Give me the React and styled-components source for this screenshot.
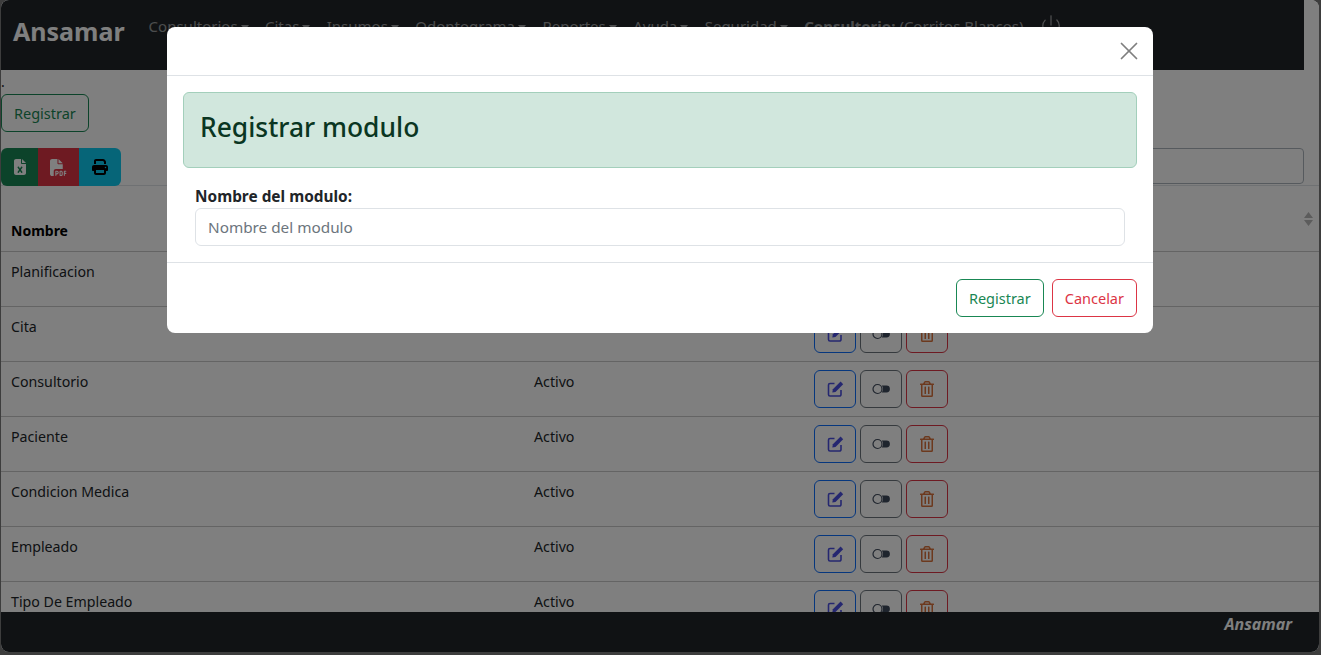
import React from "react";
import styled, { createGlobalStyle } from "styled-components";
import { FaFileExcel, FaFilePdf, FaPrint } from "react-icons/fa6";
import { FaRegTrashAlt } from "react-icons/fa";
import { Power, X } from "lucide-react";

const FONT = `"Noto Sans", "Open Sans", "Liberation Sans", sans-serif`;

const Global = createGlobalStyle`
  html, body { margin: 0; height: 100%; overflow: hidden; background: #3d3d3d; }
  body { font-family: ${FONT}; font-size: 14px; color: #212529; }
  * { box-sizing: border-box; }
`;

const Win = styled.div`
  position: relative;
  width: 1318px;
  height: 652px;
  margin-left: 1px;
  border-radius: 8px;
  overflow: hidden;
  background: #fff;
`;

const Navbar = styled.nav`
  width: 1303px;
  height: 70px;
  background: #212529;
  display: flex;
  align-items: flex-start;
  padding: 14px 0 0 12px;
`;

const Brand = styled.div`
  font-size: 25px;
  font-weight: 700;
  line-height: 34px;
  color: #fff;
  margin-right: 24px;
`;

const NavItem = styled.div`
  font-size: 15px;
  line-height: 24px;
  color: rgba(255, 255, 255, 0.55);
  margin-right: 16.4px;
  white-space: nowrap;
  display: flex;
  align-items: center;
  gap: 3px;
  b { font-weight: 700; margin-right: 4px; }
`;

const Caret = styled.span`
  width: 0;
  height: 0;
  border-left: 4px solid transparent;
  border-right: 4px solid transparent;
  border-top: 5px solid currentColor;
  margin-top: 2px;
`;

const Dot = styled.div`
  height: 24px;
  line-height: 24px;
  font-size: 14px;
`;

const Content = styled.main`
  width: 1318px;
`;

const OutlineBtn = styled.button`
  font: inherit;
  font-size: 14.5px;
  height: 38px;
  padding: 0 12px;
  background: transparent;
  border: 1px solid ${(p) => p.$c};
  color: ${(p) => p.$c};
  border-radius: 6px;
  white-space: nowrap;
`;

const RegisterRow = styled.div`
  height: 54px;
`;

const ToolRow = styled.div`
  height: 38px;
  display: flex;
  justify-content: space-between;
  align-items: flex-start;
  border-bottom: 1px solid #dee2e6;
`;

const ExportGroup = styled.div`
  display: flex;
  height: 38px;
  border-radius: 6px;
  overflow: hidden;
`;

const ExportBtn = styled.button`
  width: ${(p) => p.$w}px;
  height: 38px;
  border: 0;
  padding: 0;
  background: ${(p) => p.$bg};
  color: ${(p) => p.$fg};
  display: flex;
  align-items: center;
  justify-content: center;
`;

const Search = styled.input`
  width: 400px;
  height: 36px;
  margin-right: 15px;
  border: 1px solid #adb5bd;
  border-radius: 4px;
  background: transparent;
`;

const HeadRow = styled.div`
  position: relative;
  height: 66px;
  display: grid;
  grid-template-columns: 523px 280px 1fr;
  align-items: end;
  border-bottom: 1px solid #c8c8c8;
`;

const HeadCell = styled.div`
  padding: 0 10px 8px;
  font-weight: 700;
  font-size: 14px;
  line-height: 24px;
  color: #000;
`;

const SortMark = styled.svg`
  position: absolute;
  left: 1303px;
  top: 26px;
`;

const Row = styled.div`
  height: 55px;
  display: grid;
  grid-template-columns: 523px 280px 1fr;
  align-items: start;
  padding-top: 8px;
  border-bottom: 1px solid #c8c8c8;
`;

const Cell = styled.div`
  padding: 0 10px;
  font-size: 14.2px;
  line-height: 24px;
  color: #212529;
`;

const Actions = styled.div`
  padding: 0 10px;
  display: flex;
  gap: 4px;
`;

const IconBtn = styled.button`
  width: 42px;
  height: 38px;
  padding: 0;
  background: transparent;
  border: 1px solid ${(p) => p.$c};
  border-radius: 6px;
  color: ${(p) => p.$ic};
  display: flex;
  align-items: center;
  justify-content: center;
`;

const Footer = styled.footer`
  position: absolute;
  left: 0;
  right: 0;
  bottom: 0;
  height: 40px;
  background: #212529;
  color: #fff;
  font-size: 16px;
  font-weight: 700;
  font-style: italic;
  line-height: 25px;
  text-align: right;
  padding-right: 27px;
`;

const Backdrop = styled.div`
  position: absolute;
  inset: 0;
  background: rgba(0, 0, 0, 0.5);
  display: flex;
  justify-content: center;
  align-items: flex-start;
  padding-top: 27px;
`;

const Modal = styled.div`
  width: 986px;
  background: #fff;
  border-radius: 8px;
`;

const ModalHead = styled.div`
  height: 49px;
  border-bottom: 1px solid #dee2e6;
  display: flex;
  align-items: center;
  justify-content: flex-end;
  padding-right: 9px;
  color: #7f7f7f;
`;

const ModalBody = styled.div`
  padding: 16px 16px;
  height: 187px;
  border-bottom: 1px solid #dee2e6;
`;

const Alert = styled.div`
  height: 76px;
  background: #d1e7dd;
  border: 1px solid #a3cfbb;
  border-radius: 6px;
  display: flex;
  align-items: center;
  padding: 0 16px 6px;
  margin-bottom: 16px;
`;

const AlertTitle = styled.h2`
  margin: 0;
  font-size: 26.4px;
  font-weight: 500;
  color: #0a3622;
`;

const Field = styled.div`
  padding: 0 12px;
  display: flex;
  flex-direction: column;
`;

const Label = styled.label`
  font-size: 15.4px;
  font-weight: 700;
  line-height: 24px;
  padding-top: 1px;
  height: 24px;
  color: #212529;
`;

const Input = styled.input`
  height: 38px;
  border: 1px solid #dee2e6;
  border-radius: 6px;
  padding: 0 12px;
  font: inherit;
  font-size: 15.3px;
  &::placeholder { color: #6c757d; opacity: 1; }
`;

const ModalFoot = styled.div`
  height: 70px;
  padding: 16px;
  display: flex;
  justify-content: flex-end;
  gap: 8px;
`;

const ToggleIcon = () => (
  <svg width="18" height="12" viewBox="0 0 18 12" fill="none">
    <circle cx="5.5" cy="6" r="4.5" stroke="currentColor" strokeWidth="1.2" />
    <path d="M9.8 2.6H14.5a3.4 3.4 0 0 1 0 6.8H9.8a5.6 5.6 0 0 0 0-6.8Z" fill="currentColor" />
  </svg>
);

const EditIcon = () => (
  <svg width="17" height="16" viewBox="0 0 17 16" fill="none">
    <path
      d="M7.5 2.5H3A1.5 1.5 0 0 0 1.5 4v9.5A1.5 1.5 0 0 0 3 15h9.5a1.5 1.5 0 0 0 1.5-1.5V9"
      stroke="currentColor"
      strokeWidth="1.6"
    />
    <path d="M13.6.6l2.6 2.6-7.7 7.7-3.2.6.6-3.2z" fill="currentColor" />
  </svg>
);

const rows = [
  "Planificacion",
  "Cita",
  "Consultorio",
  "Paciente",
  "Condicion Medica",
  "Empleado",
  "Tipo De Empleado",
];

const menus = ["Consultorios", "Citas", "Insumos", "Odontograma", "Reportes", "Ayuda", "Seguridad"];

export default function App() {
  return (
    <>
      <Global />
      <Win>
        <Navbar>
          <Brand>Ansamar</Brand>
          {menus.map((m) => (
            <NavItem key={m}>
              {m}
              <Caret />
            </NavItem>
          ))}
          <NavItem>
            <span><b>Consultorio:</b>(Corritos Blancos)</span>
          </NavItem>
          <NavItem>
            <Power size={22} strokeWidth={1.4} />
          </NavItem>
        </Navbar>
        <Content>
          <Dot>.</Dot>
          <RegisterRow>
            <OutlineBtn $c="#198754">Registrar</OutlineBtn>
          </RegisterRow>
          <ToolRow>
            <ExportGroup>
              <ExportBtn $w={37} $bg="#198754" $fg="#fff"><FaFileExcel size={16} /></ExportBtn>
              <ExportBtn $w={41} $bg="#dc3545" $fg="#fff"><FaFilePdf size={17} /></ExportBtn>
              <ExportBtn $w={42} $bg="#0dcaf0" $fg="#000"><FaPrint size={16} /></ExportBtn>
            </ExportGroup>
            <Search aria-label="Buscar" />
          </ToolRow>
          <HeadRow>
            <HeadCell>Nombre</HeadCell>
            <HeadCell>Estado</HeadCell>
            <HeadCell>Acciones</HeadCell>
            <SortMark width="9" height="14" viewBox="0 0 9 14">
              <path d="M4.5 0 9 6H0Z M4.5 14 0 8h9Z" fill="#b8b8b8" />
            </SortMark>
          </HeadRow>
          {rows.map((r) => (
            <Row key={r}>
              <Cell>{r}</Cell>
              <Cell>Activo</Cell>
              <Actions>
                <IconBtn $c="#0d6efd" $ic="#4b4fe0"><EditIcon /></IconBtn>
                <IconBtn $c="#6c757d" $ic="#3f4a5c"><ToggleIcon /></IconBtn>
                <IconBtn $c="#dc3545" $ic="#d9733c"><FaRegTrashAlt size={16} /></IconBtn>
              </Actions>
            </Row>
          ))}
        </Content>
        <Footer>Ansamar</Footer>
        <Backdrop>
          <Modal>
            <ModalHead>
              <X size={30} strokeWidth={1.4} />
            </ModalHead>
            <ModalBody>
              <Alert>
                <AlertTitle>Registrar modulo</AlertTitle>
              </Alert>
              <Field>
                <Label>Nombre del modulo:</Label>
                <Input placeholder="Nombre del modulo" />
              </Field>
            </ModalBody>
            <ModalFoot>
              <OutlineBtn $c="#198754">Registrar</OutlineBtn>
              <OutlineBtn $c="#dc3545">Cancelar</OutlineBtn>
            </ModalFoot>
          </Modal>
        </Backdrop>
      </Win>
    </>
  );
}
